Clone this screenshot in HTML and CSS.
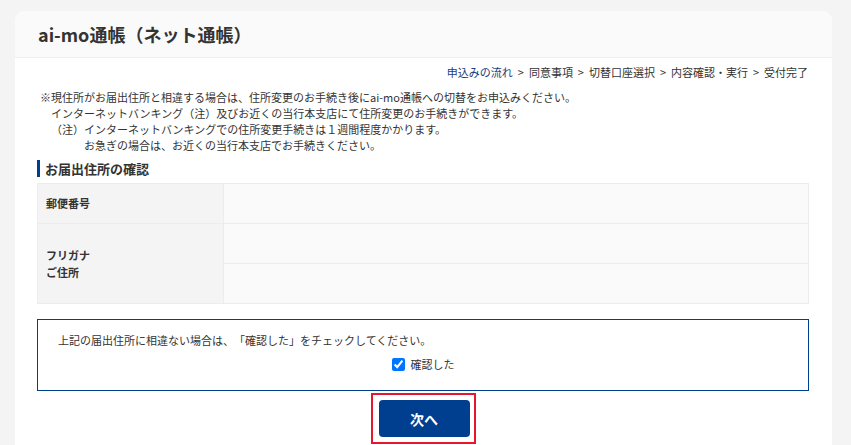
FILE: index.html
```html
<!DOCTYPE html>
<html lang="ja">
<head>
    <meta charset="UTF-8">
    <meta name="viewport" content="width=device-width, initial-scale=1.0">
    <title>ai-mo通帳（ネット通帳）</title>
    <link rel="stylesheet" href="styles.css">
</head>
<body>

<div class="card">
    <header class="card-header">
        <h1>ai-mo通帳（ネット通帳）</h1>
    </header>

    <main class="card-body">
        <p class="steps">
            <span class="step-current">申込みの流れ</span> &gt; 同意事項 &gt; 切替口座選択 &gt; 内容確認・実行 &gt; 受付完了
        </p>

        <div class="notes">
            <p>※現住所がお届出住所と相違する場合は、住所変更のお手続き後にai-mo通帳への切替をお申込みください。</p>
            <p class="indent">インターネットバンキング（注）及びお近くの当行本支店にて住所変更のお手続きができます。</p>
            <p class="indent">（注）インターネットバンキングでの住所変更手続きは１週間程度かかります。</p>
            <p class="indent-deep">お急ぎの場合は、お近くの当行本支店でお手続きください。</p>
        </div>

        <h2 class="section-title">お届出住所の確認</h2>

        <table class="address-table">
            <tr>
                <th>郵便番号</th>
                <td></td>
            </tr>
            <tr>
                <th rowspan="2">フリガナ<br>ご住所</th>
                <td></td>
            </tr>
            <tr>
                <td></td>
            </tr>
        </table>

        <div class="confirm-box">
            <p>上記の届出住所に相違ない場合は、「確認した」をチェックしてください。</p>
            <label class="confirm-check">
                <input type="checkbox" checked>
                確認した
            </label>
        </div>

        <div class="actions">
            <div class="focus-frame">
                <button class="btn-next">次へ</button>
            </div>
        </div>
    </main>
</div>

</body>
</html>
```

FILE: styles.css
```css
body {
    font-family: "Noto Sans CJK JP", sans-serif;
    margin: 0;
    padding: 11px 19px 0 15px;
    background-color: #f4f4f4;
    color: #333;
    text-spacing-trim: space-all;
}

p {
    margin: 0;
}

.card {
    background-color: #fff;
    border-radius: 10px 10px 0 0;
    overflow: hidden;
    min-height: 440px;
}

.card-header {
    background-color: #fafafa;
    border-bottom: 1px solid #eee;
    height: 46px;
    padding-left: 23px;
    display: flex;
    align-items: center;
}

.card-header h1 {
    margin: 0;
    font-size: 18px;
    font-weight: bold;
    color: #333;
    line-height: 24px;
}

.card-body {
    padding: 0 23px 0 22px;
}

.steps {
    margin-top: 6px;
    text-align: right;
    font-size: 11px;
    line-height: 16px;
    padding-right: 1px;
    word-spacing: 2.5px;
    color: #333;
}

.step-current {
    color: #1b3c7c;
}

.notes {
    margin-top: 9px;
    padding-left: 3px;
    font-size: 11px;
    line-height: 16px;
}

.notes .indent {
    padding-left: 11px;
}

.notes .indent-deep {
    padding-left: 44px;
}

.section-title {
    margin: 7px 0 0;
    font-size: 13px;
    line-height: 17px;
    font-weight: bold;
    border-left: 3px solid #003e8f;
    padding-left: 5px;
    color: #333;
}

.address-table {
    width: 100%;
    margin-top: 6px;
    border-collapse: collapse;
}

.address-table th,
.address-table td {
    border: 1px solid #ececec;
    height: 39px;
    padding: 0;
}

.address-table th {
    width: 177px;
    background-color: #f4f4f4;
    text-align: left;
    padding-left: 8px;
    font-size: 11px;
    line-height: 17px;
    font-weight: bold;
}

.address-table td {
    background-color: #fafafa;
}

.confirm-box {
    margin-top: 15px;
    border: 1px solid #003e8f;
    padding: 12px 20px 18px;
    font-size: 11px;
    line-height: 16px;
}

.confirm-check {
    display: flex;
    justify-content: center;
    align-items: center;
    margin-top: 8px;
    gap: 3px;
}

.confirm-check input {
    margin: 0 3px 0 0;
    width: 13px;
    height: 13px;
}

.actions {
    display: flex;
    justify-content: center;
    margin-top: 2px;
}

.focus-frame {
    border: 2px solid #e5172f;
    padding: 5px 4px 5px 6px;
}

.btn-next {
    display: block;
    width: 91px;
    height: 37px;
    background-color: #003e8f;
    color: #fff;
    border: none;
    border-radius: 4px;
    font-family: "Noto Sans CJK JP", sans-serif;
    font-size: 14px;
    font-weight: bold;
    cursor: pointer;
}
```
